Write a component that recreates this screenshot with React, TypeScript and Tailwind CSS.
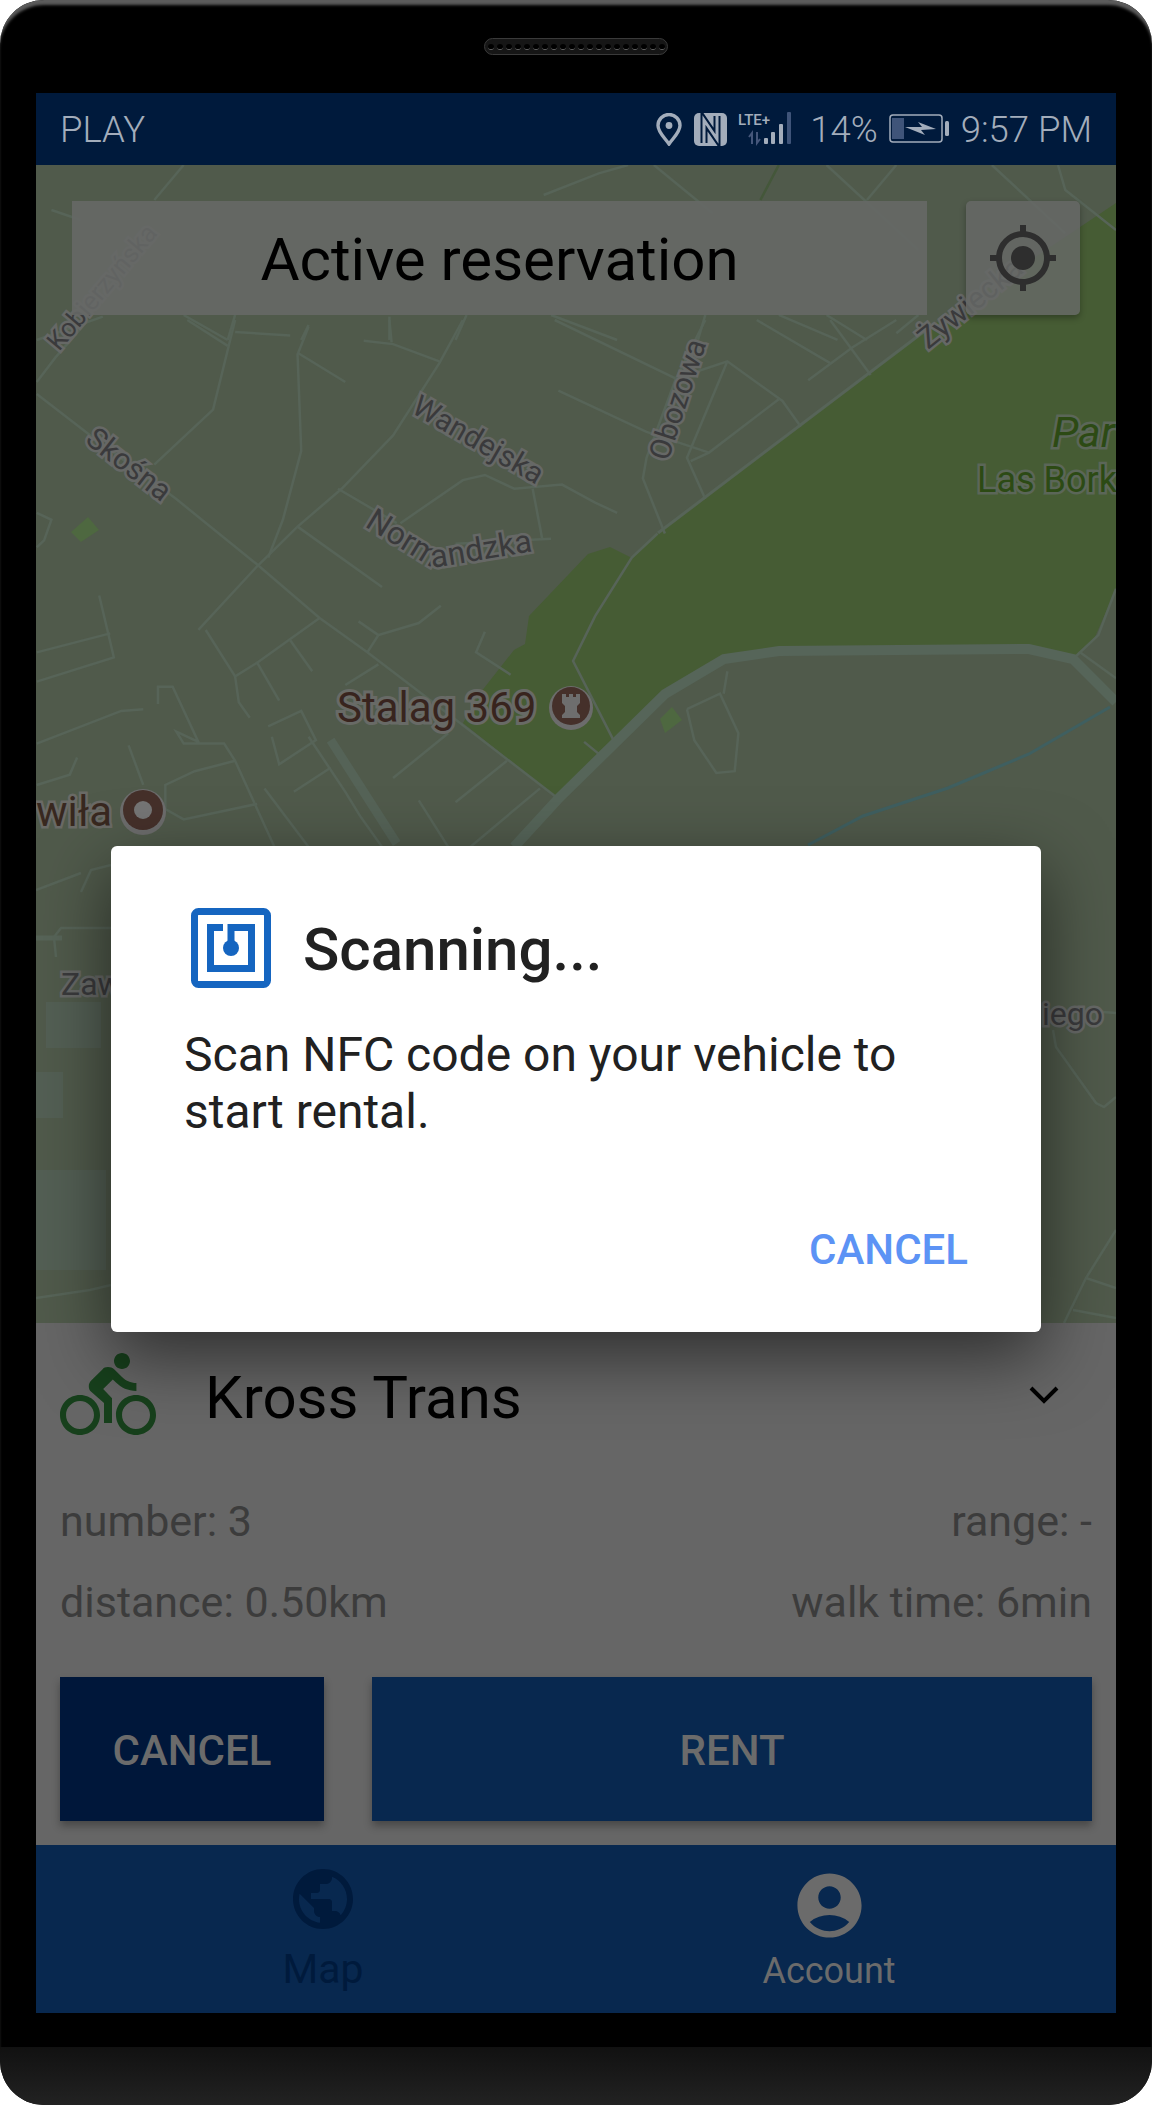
import React from 'react'
import {MdAccountCircle, MdDirectionsBike, MdGpsFixed, MdPublic} from 'react-icons/md'

// zoomed-up traces of the street map, x/y stretched so they get scaled back in the svg group
const lowerRoads = [
  '50,215 120,330 240,520 350,710 435,865 500,965 620,1160 760,1390',
  '630,0 598,125 535,335 465,490 405,600 350,715 270,900',
  '420,20 405,100 410,380 385,580 365,690',
  '320,0 290,260 210,420',
  '255,0 310,75',
  '495,60 535,70 598,120',
  '530,0 533,65',
  '405,95 470,180',
  '320,35 395,45',
  '755,0 920,170',
  '960,0 920,170 880,400 875,460 905,620',
  '760,205 880,325 965,385',
  '990,120 935,400 960,520',
  '920,170 990,120 1065,235 1090,310',
  '1060,230 965,385 940,410',
  '1100,175 1160,80 1220,0',
  '1130,0 1185,160',
  '1030,0 1130,125',
  '405,600 520,775',
  '460,490 540,590',
  '545,590 630,465 660,450 700,490 765,478 810,530 840,560',
  '725,490 738,635',
  '620,650 750,635',
  '600,830 570,880 515,915 500,965',
  '488,875 515,915',
  '660,905 648,965 695,1030',
  '435,865 350,995 320,1035 325,1110 340,1155',
  '280,900 320,1035',
  '395,930 425,1020',
  '350,995 380,1105',
  '135,800 155,980 50,1050',
  '50,965 150,910',
  '50,1230 165,1135 195,1130',
  '215,1115 215,1065 235,1065 270,1225 240,1195 250,1230 305,1230 320,1280 380,1560',
  '175,1235 195,1350',
  '320,1280 265,1310 225,1350 225,1420 250,1450 350,1405',
  '365,1180 410,1135 430,1220 380,1290 370,1210',
  '420,1210 470,1370 490,1440 530,1560',
  '515,1000 470,1060',
  '610,1200 535,1330',
  '690,1280 620,1400',
  '735,1360 640,1530',
  '570,1395 610,1530',
  '360,1360 420,1530',
  '450,1300 400,1370',
  '50,560 70,580 60,640 50,660',
  '105,1270 95,1320 50,1350',
  '935,1130 980,1085 1005,1200 1000,1310 975,1315 945,1220 935,1130',
  '990,1020 985,1085',
  '895,620 860,690 810,860 780,990 835,1220',
  '795,1225 815,1260 830,1230',
  '1460,985 1495,915 1519,780',
  '1470,965 1519,1040',
  '50,180 75,110 120,0',
]

const upperRoads = [
  '250,495 210,600',
  '890,495 970,640',
  '740,585 815,520 855,495',
  '1125,495 1250,750',
  '1220,495 1180,600',
  '1350,495 1450,700',
  '1440,495 1450,570 1519,690',
  '70,630 110,660',
  '250,945 310,1020',
  '320,945 310,1020',
  '420,975 410,1020',
  '530,950 530,1020',
  '635,945 620,1020',
  '750,945 840,1020',
  '960,945 950,1020',
  '1060,945 1140,1020',
  '1125,945 1180,1020',
  '1250,945 1220,1000',
  '50,1020 140,950',
]

const pageRoads = [
  '36,890 81,873',
  '81,892 91,870 111,865',
  '56,957 54,937 61,928 111,928',
  '1053,1030 1056,1047 1096,1103 1104,1107 1116,1097',
  '1103,1012 1116,1013',
  '1064,1323 1086,1278 1116,1230',
  '1086,1278 1116,1288',
  '1073,1310 1116,1318',
  '36,1298 90,1290 111,1285',
]

const haloText = 'fill-[#3a3a3c] stroke-[#666866] [paint-order:stroke] [stroke-width:5px]'

const StreetMap = () => (
  <svg viewBox="36 165 1080 1158" className="absolute inset-0 w-full h-full">
    <rect x="36" y="165" width="1080" height="1158" fill="#505a4b" />
    <polygon
      fill="#465c34"
      points="1116,203 926,330 658,533 632,558 610,547 588,554 529,616 525,644 514,650 481,692 463,723 558,799 602,757 665,694 724,659 779,651 1029,649 1073,659 1095,637 1116,589"
    />
    <polygon fill="#4e6840" points="88,517 99,530 81,542 71,532" />
    <polygon fill="#4e6840" points="672,707 682,720 665,733 660,719" />

    <g fill="#535f54">
      <rect x="46" y="1002" width="55" height="46" />
      <rect x="36" y="1072" width="27" height="46" />
      <rect x="36" y="1170" width="70" height="100" />
    </g>

    <g fill="none" stroke="#576458" strokeWidth="2.5">
      <g transform="translate(0,320) scale(0.7347,0.3444)">
        {lowerRoads.map((points, i) => (
          <polyline key={i} points={points} vectorEffect="non-scaling-stroke" />
        ))}
        <polyline
          points="450,1220 540,1520"
          vectorEffect="non-scaling-stroke"
          strokeWidth="9"
          stroke="#556357"
        />
      </g>
      <g transform="scale(0.7347,0.3333)">
        {upperRoads.map((points, i) => (
          <polyline key={i} points={points} vectorEffect="non-scaling-stroke" />
        ))}
        <polyline points="1060,495 1035,600" vectorEffect="non-scaling-stroke" stroke="#44573a" />
      </g>
      {pageRoads.map((points, i) => (
        <polyline key={i} points={points} />
      ))}
      <polyline points="36,938 62,938" strokeWidth="5" />
      <polyline points="926,330 658,533" strokeWidth="3" />
      <polyline
        points="514,847 558,799 665,694 724,659 779,651 1029,649 1073,659 1116,702"
        strokeWidth="10"
        stroke="#566559"
      />
      <polyline points="808,845 863,816 948,788 1029,754 1110,707" stroke="#3f5f60" strokeWidth="3" />
    </g>

    <text transform="translate(59,352) rotate(-50)" fontSize="26" className={haloText}>
      Kobierzyńska
    </text>
    <text transform="translate(84,442) rotate(38)" fontSize="30" className={haloText}>
      Skośna
    </text>
    <text transform="translate(410,412) rotate(30)" fontSize="30" className={haloText}>
      Wandejska
    </text>
    <path id="normandzka" d="M364,526 L432,568 L540,550" fill="none" />
    <text fontSize="32" className={haloText}>
      <textPath href="#normandzka">Normandzka</textPath>
    </text>
    <text transform="translate(668,462) rotate(-72)" fontSize="30" className={haloText}>
      Obozowa
    </text>
    <text transform="translate(928,350) rotate(-39)" fontSize="30" className={haloText}>
      Żywiecka
    </text>
    <text x="61" y="995" fontSize="32" className={haloText}>
      Zaw
    </text>
    <text x="1103" y="1025" fontSize="32" textAnchor="end" className={haloText}>
      iego
    </text>

    <text
      x="1052"
      y="447"
      fontSize="43"
      fontStyle="italic"
      className="fill-[#2c4a14] stroke-[#5b6658] [paint-order:stroke] [stroke-width:5px]"
    >
      Par
    </text>
    <text
      x="977"
      y="492"
      fontSize="36"
      className="fill-[#2c4a14] stroke-[#5b6658] [paint-order:stroke] [stroke-width:5px]"
    >
      Las Bork
    </text>

    <text
      x="337"
      y="722"
      fontSize="42"
      className="fill-[#38241e] stroke-[#686a66] [paint-order:stroke] [stroke-width:6px]"
    >
      Stalag 369
    </text>
    <circle cx="571" cy="708" r="22" fill="#6c6c6c" />
    <circle cx="571" cy="706" r="19" fill="#45302a" />
    <path
      d="M562,694 h4 v3 h3 v-3 h4 v3 h3 v-3 h4 v9 l-3,3 v6 l3,3 v3 h-18 v-3 l3,-3 v-6 l-3,-3 z"
      fill="#6e6e6e"
    />

    <text
      x="36"
      y="826"
      fontSize="42"
      className="fill-[#38281f] stroke-[#6a6a66] [paint-order:stroke] [stroke-width:5px]"
    >
      wiła
    </text>
    <circle cx="143" cy="812" r="23" fill="#6c6c6c" />
    <circle cx="143" cy="810" r="20" fill="#45302a" />
    <circle cx="143" cy="810" r="9" fill="#757575" />
  </svg>
)

const StatusIcons = () => (
  <div className="flex items-center">
    <svg width="26" height="33" viewBox="0 0 26 33" fill="none" stroke="#a3adbb" strokeWidth="3.4">
      <path d="M13 31 C8 24 2 19 2 12.5 A11 11 0 0 1 24 12.5 C24 19 18 24 13 31 Z" />
      <circle cx="13" cy="12.5" r="3.4" fill="#a3adbb" stroke="none" />
    </svg>
    <svg width="33" height="33" viewBox="0 0 33 33" className="ml-3">
      <rect width="33" height="33" rx="5" fill="#a3adbb" />
      <path d="M10 30 V7 L23 26 V3" fill="none" stroke="#001a3c" strokeWidth="7" />
      <path d="M10 30 V7 L23 26 V3" fill="none" stroke="#a3adbb" strokeWidth="3" />
    </svg>
    <svg width="66" height="36" viewBox="0 0 66 36" className="ml-[10px]">
      <text x="1" y="14" fontSize="15" fontWeight="500" fill="#a3adbb" textLength="32">
        LTE+
      </text>
      <path d="M15 33 V22 l-3 4 M20 21 V32 l3 -4" fill="none" stroke="#45567a" strokeWidth="2" />
      <rect x="27" y="27" width="4" height="6" rx="1" fill="#a3adbb" />
      <rect x="34" y="21" width="4" height="12" rx="1" fill="#a3adbb" />
      <rect x="42" y="13" width="4" height="20" rx="1" fill="#a3adbb" />
      <rect x="50" y="1" width="4" height="32" rx="1" fill="#3f5479" />
    </svg>
    <span className="ml-[7px] pt-[3px] text-[36.5px] font-light leading-none">14%</span>
    <svg width="64" height="30" viewBox="0 0 64 30" className="ml-[11px]">
      <rect x="1" y="1" width="52" height="27" rx="3" fill="none" stroke="#a3adbb" strokeWidth="1.5" />
      <rect x="3" y="4" width="12" height="21" fill="#3f5479" />
      <path d="M16 13 L33 13 L29 8 L47 15 L32 16 L36 21 Z" fill="#a3adbb" />
      <rect x="56" y="7" width="4" height="15" rx="1.5" fill="#a3adbb" />
    </svg>
    <span className="ml-[8px] pt-[3px] text-[36.5px] font-light leading-none">9:57 PM</span>
  </div>
)

const Speaker = () => (
  <div className="flex items-center justify-center gap-[3px] w-[184px] h-[17px] rounded-full border border-[#3a3a3a] bg-[#161616]">
    {Array.from({length: 20}).map((_, i) => (
      <span key={i} className="w-[6px] h-[6px] rounded-full bg-black border-b border-[#666]" />
    ))}
  </div>
)

const ScanDialog = () => (
  <div className="absolute left-[75px] top-[753px] w-[930px] h-[486px] bg-white rounded-[6px] shadow-[0_24px_70px_rgba(0,0,0,0.55)] flex flex-col text-[#212121]">
    <div className="flex items-center pt-[62px] pl-[80px]">
      <svg width="80" height="80" viewBox="0 0 80 80">
        <rect x="3.5" y="3.5" width="73" height="73" rx="4" fill="#fff" stroke="#1565c0" strokeWidth="7" />
        <path d="M32 19.5 H19.5 V60.5 H60.5 V19.5 H40 V40" fill="none" stroke="#1565c0" strokeWidth="7" />
        <circle cx="40" cy="40" r="8" fill="#1565c0" />
      </svg>
      <span className="ml-[32px] pt-[3px] text-[60px] leading-[70px] font-medium">Scanning...</span>
    </div>
    <p className="mt-[38px] px-[73px] text-[48px] leading-[57px]">
      Scan NFC code on your vehicle to start rental.
    </p>
    <div className="mt-auto pb-[58px] pr-[73px] flex justify-end">
      <span className="text-[42px] leading-[48px] font-medium text-[#5c93f5]">CANCEL</span>
    </div>
  </div>
)

const App = () => (
  <div className="w-[1152px] h-[2105px] bg-white [font-family:Roboto,sans-serif]">
    <div className="relative h-full flex flex-col bg-black rounded-[44px] overflow-hidden shadow-[inset_0_6px_3px_-1px_#5c5c5c]">
      <div className="h-[93px] flex justify-center pt-[38px]">
        <Speaker />
      </div>

      <div className="relative mx-[36px] h-[1920px] flex flex-col overflow-hidden">
        <div className="h-[72px] flex items-center justify-between px-[24px] bg-[#001a3c] text-[#a3adbb]">
          <span className="pt-[3px] text-[36.5px] font-light leading-none">PLAY</span>
          <StatusIcons />
        </div>

        <div className="relative h-[1158px] overflow-hidden">
          <StreetMap />
          <div className="absolute left-[36px] top-[36px] w-[855px] h-[114px] pt-[3px] flex items-center justify-center bg-[#666866]/90 text-[60px] text-black">
            Active reservation
          </div>
          <div className="absolute left-[930px] top-[36px] w-[114px] h-[114px] flex items-center justify-center rounded-[5px] bg-[#666866]/85 shadow-[0_3px_6px_rgba(0,0,0,0.3)]">
            <MdGpsFixed size={72} color="#2e2e2e" />
          </div>
        </div>

        <div className="h-[522px] flex flex-col px-[24px] bg-[#666666]">
          <div className="mt-[24px] flex items-center h-[96px]">
            <MdDirectionsBike size={96} color="#17401c" />
            <span className="ml-[49px] pt-[5px] text-[60px] leading-none text-black">Kross Trans</span>
            <svg width="32" height="20" viewBox="0 0 32 20" className="ml-auto mr-[32px]">
              <path d="M3 3 L16 16 L29 3" fill="none" stroke="#000" strokeWidth="4" />
            </svg>
          </div>
          <div className="mt-[38px] flex justify-between h-[81px] items-center text-[43px] text-[#3c3c3c]">
            <span>number: 3</span>
            <span>range: -</span>
          </div>
          <div className="flex justify-between h-[81px] items-center text-[43px] text-[#3c3c3c]">
            <span>distance: 0.50km</span>
            <span>walk time: 6min</span>
          </div>
          <div className="mt-[34px] flex gap-[48px]">
            <button className="w-[264px] h-[144px] pt-[3px] bg-[#00173a] text-[42px] font-medium text-[#6b6b6b] shadow-[0_5px_8px_rgba(0,0,0,0.3)]">
              CANCEL
            </button>
            <button className="flex-1 h-[144px] pt-[3px] bg-[#08284f] text-[42px] font-medium text-[#6b6b6b] shadow-[0_5px_8px_rgba(0,0,0,0.3)]">
              RENT
            </button>
          </div>
        </div>

        <div className="h-[168px] flex justify-between px-[187px] bg-[#08284f]">
          <div className="w-[200px] flex flex-col items-center pt-[18px] text-[#001a3c]">
            <MdPublic size={72} />
            <span className="mt-[10px] text-[41px] leading-[48px]">Map</span>
          </div>
          <div className="w-[200px] flex flex-col items-center pt-[22px] text-[#6b6b6b]">
            <MdAccountCircle size={77} />
            <span className="mt-[7px] text-[36px] leading-[40px]">Account</span>
          </div>
        </div>

        <ScanDialog />
      </div>

      <div className="h-[34px]" />
      <div className="flex-1 bg-linear-to-b from-[#111111] to-[#222222]" />
    </div>
  </div>
)

export default App
